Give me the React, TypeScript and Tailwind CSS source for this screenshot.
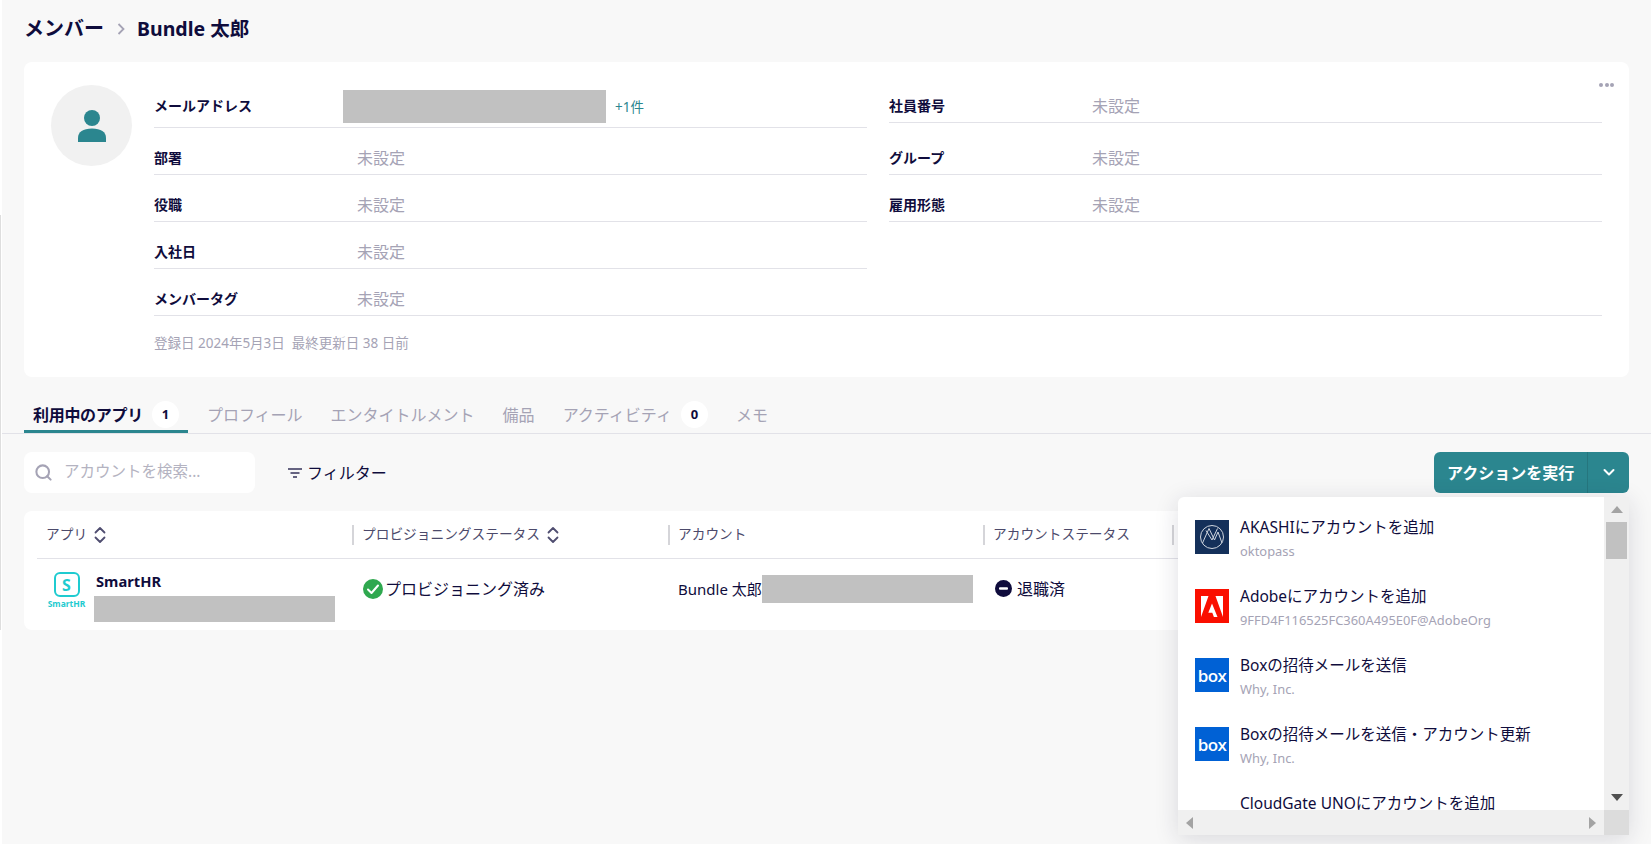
import { Search } from "lucide-react";

const TEAL = "bg-[#2b868f]";

function InfoRow({ label, value = "未設定", short }: { label: string; value?: string; short?: boolean }) {
  return (
    <div className={`flex items-end border-b border-[#e2e2e8] pb-[4px] ${short ? "h-[38px]" : "h-[47px]"}`}>
      <div className="w-[203px] text-[14px] leading-[24px] font-bold text-[#0f0c3c]">{label}</div>
      <div className="text-[16px] leading-[24px] text-[#a5a3b5]">{value}</div>
    </div>
  );
}

function SortIcon() {
  return (
    <svg className="ml-[6px] shrink-0" width="14" height="18" viewBox="0 0 14 18" fill="none" stroke="#4f4d70" strokeWidth="1.8" strokeLinecap="round" strokeLinejoin="round">
      <path d="M2.5 6.5 7 2l4.5 4.5" />
      <path d="M2.5 11.5 7 16l4.5-4.5" />
    </svg>
  );
}

function HeaderCell({ label, sort, first }: { label: string; sort?: boolean; first?: boolean }) {
  return (
    <div className="flex items-center h-full">
      <div className={`flex items-center h-[20px] ${first ? "pl-[9px]" : "border-l-2 border-[#d5d5d9] pl-[8px]"}`}>
        <span className="text-[13.7px] text-[#4c4a6b]">{label}</span>
        {sort && <SortIcon />}
      </div>
    </div>
  );
}

function Tab({ label, count, active }: { label: string; count?: number; active?: boolean }) {
  return (
    <div className={`relative flex h-[32px] items-center px-[9px] ${active ? "border-b-[3px] border-[#2b868f] pb-[2px]" : "pb-[5px]"}`}>
      <span className={`text-[16px] whitespace-nowrap ${active ? "font-bold tracking-[-0.3px] text-[#0f0c3c]" : "text-[#a5a3b5]"}`}>{label}</span>
      {count !== undefined && (
        <span className="ml-[9px] -my-[2px] flex h-[27px] w-[27px] items-center justify-center rounded-full bg-white text-[13px] font-bold text-[#0f0c3c]">
          {count}
        </span>
      )}
    </div>
  );
}

function AkashiLogo() {
  return (
    <svg className="h-full w-full" viewBox="0 0 34 34">
      <rect width="34" height="34" fill="#14305a" />
      <g fill="none" stroke="#d0d6df" strokeWidth="1">
        <circle cx="17" cy="17" r="11.500" />
        <path d="M7.500 23 14 8.500 19.500 20 23 12 27 23" />
        <path d="M11 10.500 17 20 22.500 8.500" />
      </g>
    </svg>
  );
}

function AdobeLogo() {
  return (
    <svg className="h-full w-full" viewBox="0 0 34 34">
      <rect width="34" height="34" fill="#fa0f00" />
      <path fill="#fff" d="M20.500 7H28v21zM13.500 7H6v21zM17 14.500 22.500 28h-3.600l-1.600-4.200h-4z" />
    </svg>
  );
}

function BoxLogo() {
  return (
    <div className="flex h-full w-full items-center justify-center bg-[#0061d5] font-['Open_Sans',sans-serif] text-[17px] leading-none font-semibold tracking-[-0.6px] text-white">
      box
    </div>
  );
}

function ActionItem({ title, sub, logo }: { title: string; sub: string; logo?: React.ReactNode }) {
  return (
    <div className="flex h-[69px] shrink-0 pl-[17px]">
      <div className="h-[34px] w-[34px] shrink-0">{logo}</div>
      <div className="ml-[11px] -mt-[4px]">
        <div className="text-[15.500px] leading-[22px] whitespace-nowrap text-[#0f0c3c]">{title}</div>
        <div className="mt-[3px] text-[12.900px] leading-[20px] whitespace-nowrap text-[#a5a3b5]">{sub}</div>
      </div>
    </div>
  );
}

function ActionMenu() {
  return (
    <div className="absolute top-[45px] right-0 z-10 flex h-[338px] w-[451px] flex-col rounded-tl-[6px] bg-[#f0f0f0] shadow-[0_4px_24px_rgba(30,30,60,0.14)]">
      <div className="flex min-h-0 flex-1">
        <div className="flex flex-1 flex-col overflow-hidden rounded-tl-[6px] bg-white pt-[23px]">
          <ActionItem title="AKASHIにアカウントを追加" sub="oktopass" logo={<AkashiLogo />} />
          <ActionItem title="Adobeにアカウントを追加" sub="9FFD4F116525FC360A495E0F@AdobeOrg" logo={<AdobeLogo />} />
          <ActionItem title="Boxの招待メールを送信" sub="Why, Inc." logo={<BoxLogo />} />
          <ActionItem title="Boxの招待メールを送信・アカウント更新" sub="Why, Inc." logo={<BoxLogo />} />
          <ActionItem title="CloudGate UNOにアカウントを追加" sub="" />
        </div>
        <div className="flex w-[25px] flex-col items-center justify-between pt-[9px] pb-[9px]">
          <div className="flex w-full flex-col items-center">
            <svg width="12" height="7" viewBox="0 0 12 7"><path d="M6 0l6 7H0z" fill="#a3a3a3" /></svg>
            <div className="mt-[9px] h-[37px] w-[21px] bg-[#c1c1c1]" />
          </div>
          <svg width="12" height="7" viewBox="0 0 12 7"><path d="M6 7 0 0h12z" fill="#505050" /></svg>
        </div>
      </div>
      <div className="flex h-[25px] shrink-0">
        <div className="flex flex-1 items-center justify-between pr-[8px] pl-[8px]">
          <svg width="7" height="12" viewBox="0 0 7 12"><path d="M0 6l7-6v12z" fill="#a3a3a3" /></svg>
          <svg width="7" height="12" viewBox="0 0 7 12"><path d="M7 6 0 12V0z" fill="#a3a3a3" /></svg>
        </div>
        <div className="w-[25px] bg-[#dcdcdc]" />
      </div>
    </div>
  );
}

export default function App() {
  return (
    <div className="flex h-[844px] w-full overflow-hidden bg-[#f8f8f8] font-['Noto_Sans','Noto_Sans_CJK_JP',sans-serif]">
      {/* what is left of the sidebar edge */}
      <div className="w-[2px] shrink-0 bg-white pt-[215px]">
        <div className="h-[415px] w-px bg-[#dedede]" />
      </div>

      <div className="min-w-0 flex-1">
        {/* breadcrumb */}
        <div className="flex h-[62px] items-center px-[22px] pb-[5px]">
          <span className="text-[20px] font-bold text-[#0f0c3c]">メンバー</span>
          <svg className="mr-[11px] ml-[12px]" width="10" height="14" viewBox="0 0 10 14" fill="none" stroke="#a5a3b5" strokeWidth="1.8">
            <path d="M2.5 2l5 5-5 5" />
          </svg>
          <span className="text-[19.500px] font-bold text-[#0f0c3c]">Bundle 太郎</span>
        </div>

        {/* member card */}
        <div className="px-[22px]">
          <div className="relative flex h-[315px] rounded-[8px] bg-white pt-[23px] pr-[27px] pl-[27px]">
            <div className="absolute top-[21px] right-[15px] flex gap-[1.5px]">
              <div className="h-[4px] w-[4px] rounded-full bg-[#a5a3b5]" />
              <div className="h-[4px] w-[4px] rounded-full bg-[#a5a3b5]" />
              <div className="h-[4px] w-[4px] rounded-full bg-[#a5a3b5]" />
            </div>
            <div className="flex h-[81px] w-[81px] shrink-0 items-center justify-center rounded-full bg-[#f1f1f1]">
              <svg width="28" height="32" viewBox="0 0 28 32" fill="#2b868f">
                <circle cx="14" cy="8" r="8" />
                <path d="M0 32v-4c0-6 5-9.500 14-9.500S28 22 28 28v4z" />
              </svg>
            </div>
            <div className="ml-[22px] min-w-0 flex-1">
              <div className="flex gap-[22px]">
                <div className="min-w-0 flex-1">
                  <div className="flex h-[43px] items-start border-b border-[#e2e2e8]">
                    <div className="mt-[9px] w-[189px] text-[14px] leading-[24px] font-bold text-[#0f0c3c]">メールアドレス</div>
                    <div className="mt-[5px] h-[33px] w-[263px] bg-[#c1c1c1]" />
                    <div className="mt-[12px] ml-[9px] text-[13.500px] leading-[20px] text-[#2b868f]">+1件</div>
                  </div>
                  <InfoRow label="部署" />
                  <InfoRow label="役職" />
                  <InfoRow label="入社日" />
                </div>
                <div className="min-w-0 flex-1">
                  <InfoRow label="社員番号" short />
                  <div className="mt-[5px]" />
                  <InfoRow label="グループ" />
                  <InfoRow label="雇用形態" />
                </div>
              </div>
              <InfoRow label="メンバータグ" />
              <div className="mt-[15px] text-[13.500px] leading-[24px] text-[#a5a3b5]">登録日 2024年5月3日 &nbsp;最終更新日 38 日前</div>
            </div>
          </div>
        </div>

        {/* tabs */}
        <div className="mt-[24px] flex gap-[10px] border-b border-[#e2e2e8] px-[22px]">
          <Tab label="利用中のアプリ" count={1} active />
          <Tab label="プロフィール" />
          <Tab label="エンタイトルメント" />
          <Tab label="備品" />
          <Tab label="アクティビティ" count={0} />
          <Tab label="メモ" />
        </div>

        {/* toolbar */}
        <div className="mt-[18px] flex h-[41px] items-center px-[22px]">
          <div className="flex h-full w-[231px] items-center rounded-[8px] bg-white pl-[10px]">
            <Search size={19} strokeWidth={2.6} className="text-[#a5a3b5]" />
            <span className="ml-[11px] pb-[1px] text-[15.500px] text-[#b4b3c1]">アカウントを検索...</span>
          </div>
          <div className="ml-[33px] flex items-center">
            <svg width="14" height="12" viewBox="0 0 14 12" fill="none" stroke="#34325a" strokeWidth="1.7">
              <path d="M0 2h14M2.500 6h9M5 10h4" />
            </svg>
            <span className="ml-[5px] text-[16px] text-[#0f0c3c]">フィルター</span>
          </div>
          <div className="relative ml-auto">
            <div className={`flex h-[41px] w-[195px] items-center rounded-[6px] ${TEAL}`}>
              <div className="flex h-full flex-1 items-center border-r border-[#26767e] pl-[13px] text-[16px] font-bold whitespace-nowrap text-white">
                アクションを実行
              </div>
              <div className="flex w-[41px] items-center justify-center">
                <svg width="14" height="9" viewBox="0 0 14 9" fill="none" stroke="#fff" strokeWidth="2" strokeLinecap="round" strokeLinejoin="round">
                  <path d="M2.500 2 7 6.500 11.500 2" />
                </svg>
              </div>
            </div>
            <ActionMenu />
          </div>
        </div>

        {/* table */}
        <div className="mx-[22px] mt-[18px] h-[119px] rounded-[8px] bg-white px-[13px]">
          <div className="grid h-[48px] grid-cols-[315px_316px_315px_189px_1fr] border-b border-[#e2e2e8]">
            <HeaderCell label="アプリ" sort first />
            <HeaderCell label="プロビジョニングステータス" sort />
            <HeaderCell label="アカウント" />
            <HeaderCell label="アカウントステータス" />
            <HeaderCell label="" />
          </div>
          <div className="grid h-[71px] grid-cols-[315px_316px_315px_189px_1fr]">
            <div className="flex pt-[13px] pl-[11px]">
              <div className="flex w-[37px] shrink-0 flex-col items-center">
                <div className="flex h-[25px] w-[26px] items-center justify-center rounded-[6px] border-[2.5px] border-[#1fcbd0] text-[16px] leading-none font-bold text-[#1fcbd0]">
                  S
                </div>
                <div className="mt-[2px] text-[8.500px] leading-[10px] font-bold whitespace-nowrap text-[#1fcbd0]">SmartHR</div>
              </div>
              <div className="ml-[9px] -mt-[1px]">
                <div className="pl-[2px] text-[14.700px] leading-[20px] font-bold text-[#0f0c3c]">SmartHR</div>
                <div className="mt-[5px] h-[26px] w-[241px] bg-[#c1c1c1]" />
              </div>
            </div>
            <div className="flex items-center pl-[11px] pb-[12px]">
              <svg width="20" height="20" viewBox="0 0 20 20" className="shrink-0">
                <circle cx="10" cy="10" r="10" fill="#2fa84f" />
                <path d="M5 10.500l3.500 3.500L15 6.500" fill="none" stroke="#fff" strokeWidth="2" strokeLinecap="round" strokeLinejoin="round" />
              </svg>
              <span className="ml-[2px] text-[16px] text-[#0f0c3c]">プロビジョニング済み</span>
            </div>
            <div className="flex items-start pt-[16px] pl-[10px]">
              <span className="text-[15px] leading-[28px] whitespace-nowrap text-[#0f0c3c]">Bundle 太郎</span>
              <div className="h-[28px] w-[211px] bg-[#c1c1c1]" />
            </div>
            <div className="flex items-center pl-[12px] pb-[12px]">
              <svg width="17" height="17" viewBox="0 0 17 17" className="shrink-0">
                <circle cx="8.500" cy="8.500" r="8.500" fill="#0f0c3c" />
                <rect x="4" y="7.200" width="9" height="2.600" rx="1" fill="#fff" />
              </svg>
              <span className="ml-[5px] text-[16px] text-[#0f0c3c]">退職済</span>
            </div>
            <div />
          </div>
        </div>
      </div>
    </div>
  );
}
